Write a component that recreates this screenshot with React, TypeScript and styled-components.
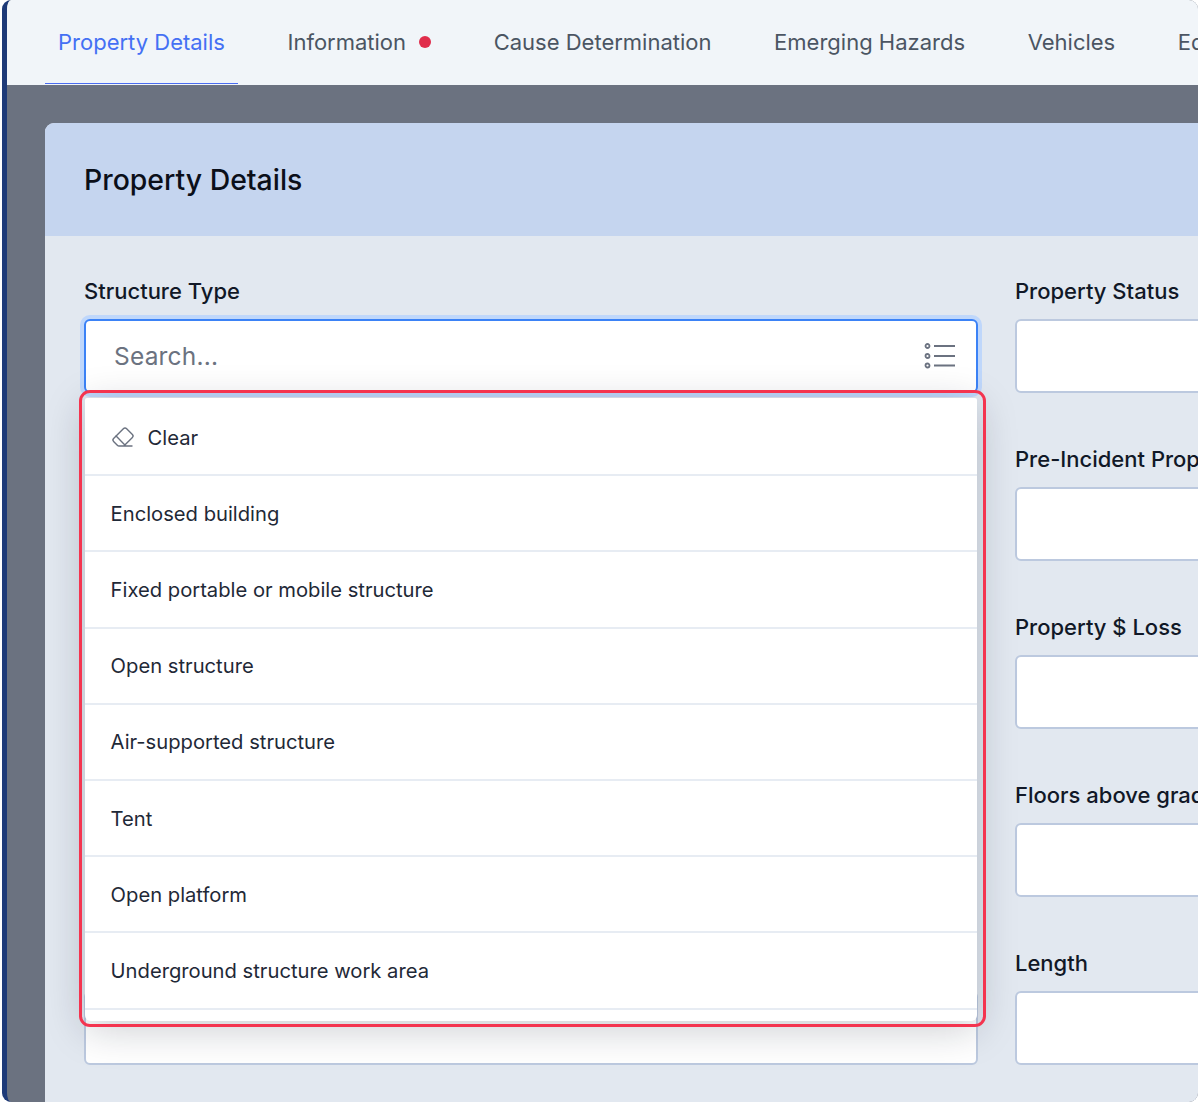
import { Fragment } from "react";
import styled, { createGlobalStyle } from "styled-components";
import { Eraser } from "lucide-react";

const GlobalStyle = createGlobalStyle`
    html, body {
        margin: 0;
        padding: 0;
        background: #ffffff;
    }
    * {
        box-sizing: border-box;
    }
    body {
        font-family: Inter, "Liberation Sans", sans-serif;
    }
`

const Page = styled.div`
    position: relative;
    width: 1200px;
    height: 1104px;
    padding: 0 2px 2px 2px;
    background: #ffffff;
    overflow: hidden;
`

const Frame = styled.div`
    display: flex;
    flex-direction: column;
    height: 100%;
    border-left: 5px solid #1e3a78;
    border-radius: 9px;
    overflow: hidden;
    background: #6b7280;
`

const TabBar = styled.nav`
    display: flex;
    flex: none;
    gap: 36.6px;
    height: 85px;
    padding-left: 38px;
    background: #f1f5f9;
    overflow: hidden;
`

const Tab = styled.div<{ $active?: boolean }>`
    display: flex;
    flex: none;
    align-items: center;
    gap: 13px;
    height: 84px;
    padding: 0 13px;
    font-size: 22px;
    font-weight: 400;
    white-space: nowrap;
    color: ${({ $active }) => ($active ? "#4470f4" : "#4b5563")};
    border-bottom: 1px solid ${({ $active }) => ($active ? "#4a6cf0" : "transparent")};
`

const Dot = styled.span`
    width: 12px;
    height: 12px;
    border-radius: 50%;
    background: #e02d4b;
`

const Content = styled.main`
    flex: 1;
    min-height: 0;
    padding: 38px 0 0 38px;
`

const Card = styled.section`
    height: 100%;
    border-radius: 9px 0 0 0;
    background: #e2e8f0;
    overflow: hidden;
`

const CardHeader = styled.header`
    display: flex;
    align-items: center;
    height: 113px;
    padding-left: 39px;
    background: #c5d5ef;
`

const CardTitle = styled.h2`
    margin: 0;
    font-size: 28.4px;
    font-weight: 500;
    color: #0b0f19;
`

const FormGrid = styled.div`
    display: grid;
    grid-template-columns: 894px 894px;
    grid-auto-rows: 168px;
    column-gap: 37px;
    padding: 39px 0 0 39px;
`

const Field = styled.div`
    position: relative;
    display: flex;
    flex-direction: column;
    gap: 12px;
`

const Label = styled.label`
    height: 32px;
    line-height: 32px;
    font-size: 22px;
    font-weight: 500;
    white-space: nowrap;
    color: #111827;
`

const Input = styled.div<{ $focused?: boolean }>`
    display: flex;
    align-items: center;
    justify-content: space-between;
    height: 74px;
    padding: 0 20px 0 28px;
    border-radius: 6px;
    background: #ffffff;
    border: ${({ $focused }) => ($focused ? "2px solid #3b82f6" : "2px solid #bcc9df")};
    box-shadow: ${({ $focused }) => ($focused ? "0 0 0 4px #bfd7fb" : "none")};
`

const Placeholder = styled.span`
    font-size: 24.5px;
    letter-spacing: 0.2px;
    color: #6b7280;
`

const Dropdown = styled.div`
    position: absolute;
    z-index: 2;
    top: 123px;
    left: 1px;
    width: 892px;
    height: 623px;
    padding-top: 2px;
    background: #ffffff;
    border-radius: 2px 2px 6px 6px;
    box-shadow: 0 8px 40px rgba(15, 23, 42, 0.22);
    overflow: hidden;
`

const Option = styled.div`
    display: flex;
    align-items: center;
    gap: 13px;
    height: 76.2px;
    padding-left: 25.6px;
    font-size: 20.2px;
    color: #1f2937;
    border-bottom: 2px solid #e7ecf3;
`

const ClearIcon = styled(Eraser)`
    width: 24px;
    height: 24px;
    color: #6b7280;
    stroke-width: 1.4;
`

const Annotation = styled.div`
    position: absolute;
    z-index: 3;
    left: 79px;
    top: 390px;
    width: 907px;
    height: 637px;
    border: 3px solid #f4344f;
    border-radius: 11px;
    pointer-events: none;
`

const tabs = ["Property Details", "Information", "Cause Determination", "Emerging Hazards", "Vehicles", "Ed"];

const options = [
    "Enclosed building",
    "Fixed portable or mobile structure",
    "Open structure",
    "Air-supported structure",
    "Tent",
    "Open platform",
    "Underground structure work area",
];

const rightLabels = [
    "Property Status",
    "Pre-Incident Property Value",
    "Property $ Loss",
    "Floors above grade",
    "Length",
];

const ListIcon = () => (
    <svg width="32" height="28" viewBox="0 0 32 28" fill="none" stroke="#6b7280">
        <circle cx="3.5" cy="4" r="2" strokeWidth="1.8" />
        <circle cx="3.5" cy="14" r="2" strokeWidth="1.8" />
        <circle cx="3.5" cy="23.5" r="2" strokeWidth="1.8" />
        <path d="M10 4H31M10 14H31M10 23.5H31" strokeWidth="2" />
    </svg>
);

const App = () => {
    return (
        <Page>
            <GlobalStyle />
            <Frame>
                <TabBar>
                    {tabs.map((tab, i) => (
                        <Tab key={tab} $active={i === 0}>
                            {tab}
                            {tab === "Information" && <Dot />}
                        </Tab>
                    ))}
                </TabBar>
                <Content>
                    <Card>
                        <CardHeader>
                            <CardTitle>Property Details</CardTitle>
                        </CardHeader>
                        <FormGrid>
                            {rightLabels.map((label, i) => (
                                <Fragment key={label}>
                                    <Field>
                                        <Label>{i === 0 ? "Structure Type" : ""}</Label>
                                        {i === 0 && (
                                            <Input $focused>
                                                <Placeholder>Search...</Placeholder>
                                                <ListIcon />
                                            </Input>
                                        )}
                                        {i === rightLabels.length - 1 && <Input />}
                                        {i === 0 && (
                                            <Dropdown>
                                                <Option>
                                                    <ClearIcon />
                                                    Clear
                                                </Option>
                                                {options.map((option) => (
                                                    <Option key={option}>{option}</Option>
                                                ))}
                                            </Dropdown>
                                        )}
                                    </Field>
                                    <Field>
                                        <Label>{label}</Label>
                                        <Input />
                                    </Field>
                                </Fragment>
                            ))}
                        </FormGrid>
                    </Card>
                </Content>
            </Frame>
            <Annotation />
        </Page>
    );
};

export default App;
